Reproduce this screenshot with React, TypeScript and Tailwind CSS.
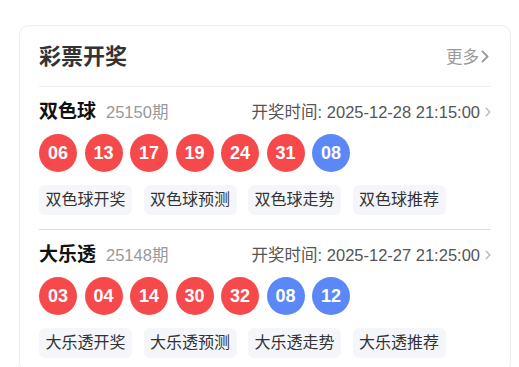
import React from "react";

const FONT = '"Liberation Sans", "Noto Sans CJK SC", sans-serif';

type Lottery = {
  name: string;
  issue: string;
  time: string;
  red: string[];
  blue: string[];
};

const data: Lottery[] = [
  {
    name: "双色球",
    issue: "25150期",
    time: "2025-12-28 21:15:00",
    red: ["06", "13", "17", "19", "24", "31"],
    blue: ["08"],
  },
  {
    name: "大乐透",
    issue: "25148期",
    time: "2025-12-27 21:25:00",
    red: ["03", "04", "14", "30", "32"],
    blue: ["08", "12"],
  },
];

function Chevron({ w, h, color, sw }: { w: number; h: number; color: string; sw: number }) {
  return (
    <svg width={w} height={h} viewBox={`0 0 ${w} ${h}`} fill="none">
      <path
        d={`M${sw / 2 + 0.5} ${sw / 2 + 0.5} L${w - sw / 2 - 0.5} ${h / 2} L${sw / 2 + 0.5} ${h - sw / 2 - 0.5}`}
        stroke={color}
        strokeWidth={sw}
        strokeLinecap="round"
        strokeLinejoin="round"
      />
    </svg>
  );
}

function Ball({ n, blue }: { n: string; blue?: boolean }) {
  return (
    <div
      className={`w-[38px] h-[38px] rounded-full flex items-center justify-center text-white font-bold text-[18px] leading-none ${
        blue ? "bg-[#5b88f6]" : "bg-[#f6494b]"
      }`}
    >
      {n}
    </div>
  );
}

function Section({ item, last }: { item: Lottery; last?: boolean }) {
  const tags = ["开奖", "预测", "走势", "推荐"];
  return (
    <div className={`pt-[13px] pb-[14px] ${last ? "" : "border-b border-[#dddddd]"}`}>
      <div className="flex items-center justify-between h-[24px]">
        <div className="flex items-center">
          <span className="text-[19px] font-bold text-[#111] leading-[24px]">{item.name}</span>
          <span className="ml-[10px] text-[16.5px] text-[#999] leading-[24px]">{item.issue}</span>
        </div>
        <div className="flex items-center text-[16.5px] text-[#555] leading-[24px]">
          <span>开奖时间: {item.time}</span>
          <span className="ml-[5px] flex items-center">
            <Chevron w={6} h={10} color="#bbbbbb" sw={1.4} />
          </span>
        </div>
      </div>
      <div className="flex items-center gap-[7.5px] mt-[10px]">
        {item.red.map((n, i) => (
          <Ball key={"r" + i} n={n} />
        ))}
        {item.blue.map((n, i) => (
          <Ball key={"b" + i} n={n} blue />
        ))}
      </div>
      <div className="flex items-center gap-[11.5px] mt-[13px]">
        {tags.map((t) => (
          <div
            key={t}
            className="h-[30px] px-[6.5px] rounded-[6px] bg-[#f5f6fa] text-[16px] text-[#333] flex items-center leading-none"
          >
            {item.name}
            {t}
          </div>
        ))}
      </div>
    </div>
  );
}

export default function App() {
  return (
    <div className="w-[519px] h-[367px] bg-white overflow-hidden pt-[25px] pl-[19px]" style={{ fontFamily: FONT }}>
      <div className="w-[492px] border border-[#ececec] rounded-[10px] px-[19px]">
        <div className="h-[61px] pt-[1px] flex items-center justify-between border-b border-[#eeeeee]">
          <span className="text-[22px] font-bold text-[#333] leading-[30px]">彩票开奖</span>
          <span className="flex items-center text-[16.5px] text-[#999] leading-[24px] mr-[2px]">
            更多
            <span className="ml-[2px] flex items-center">
              <Chevron w={8} h={13} color="#999999" sw={1.8} />
            </span>
          </span>
        </div>
        {data.map((d, i) => (
          <Section key={d.name} item={d} last={i === data.length - 1} />
        ))}
      </div>
    </div>
  );
}
